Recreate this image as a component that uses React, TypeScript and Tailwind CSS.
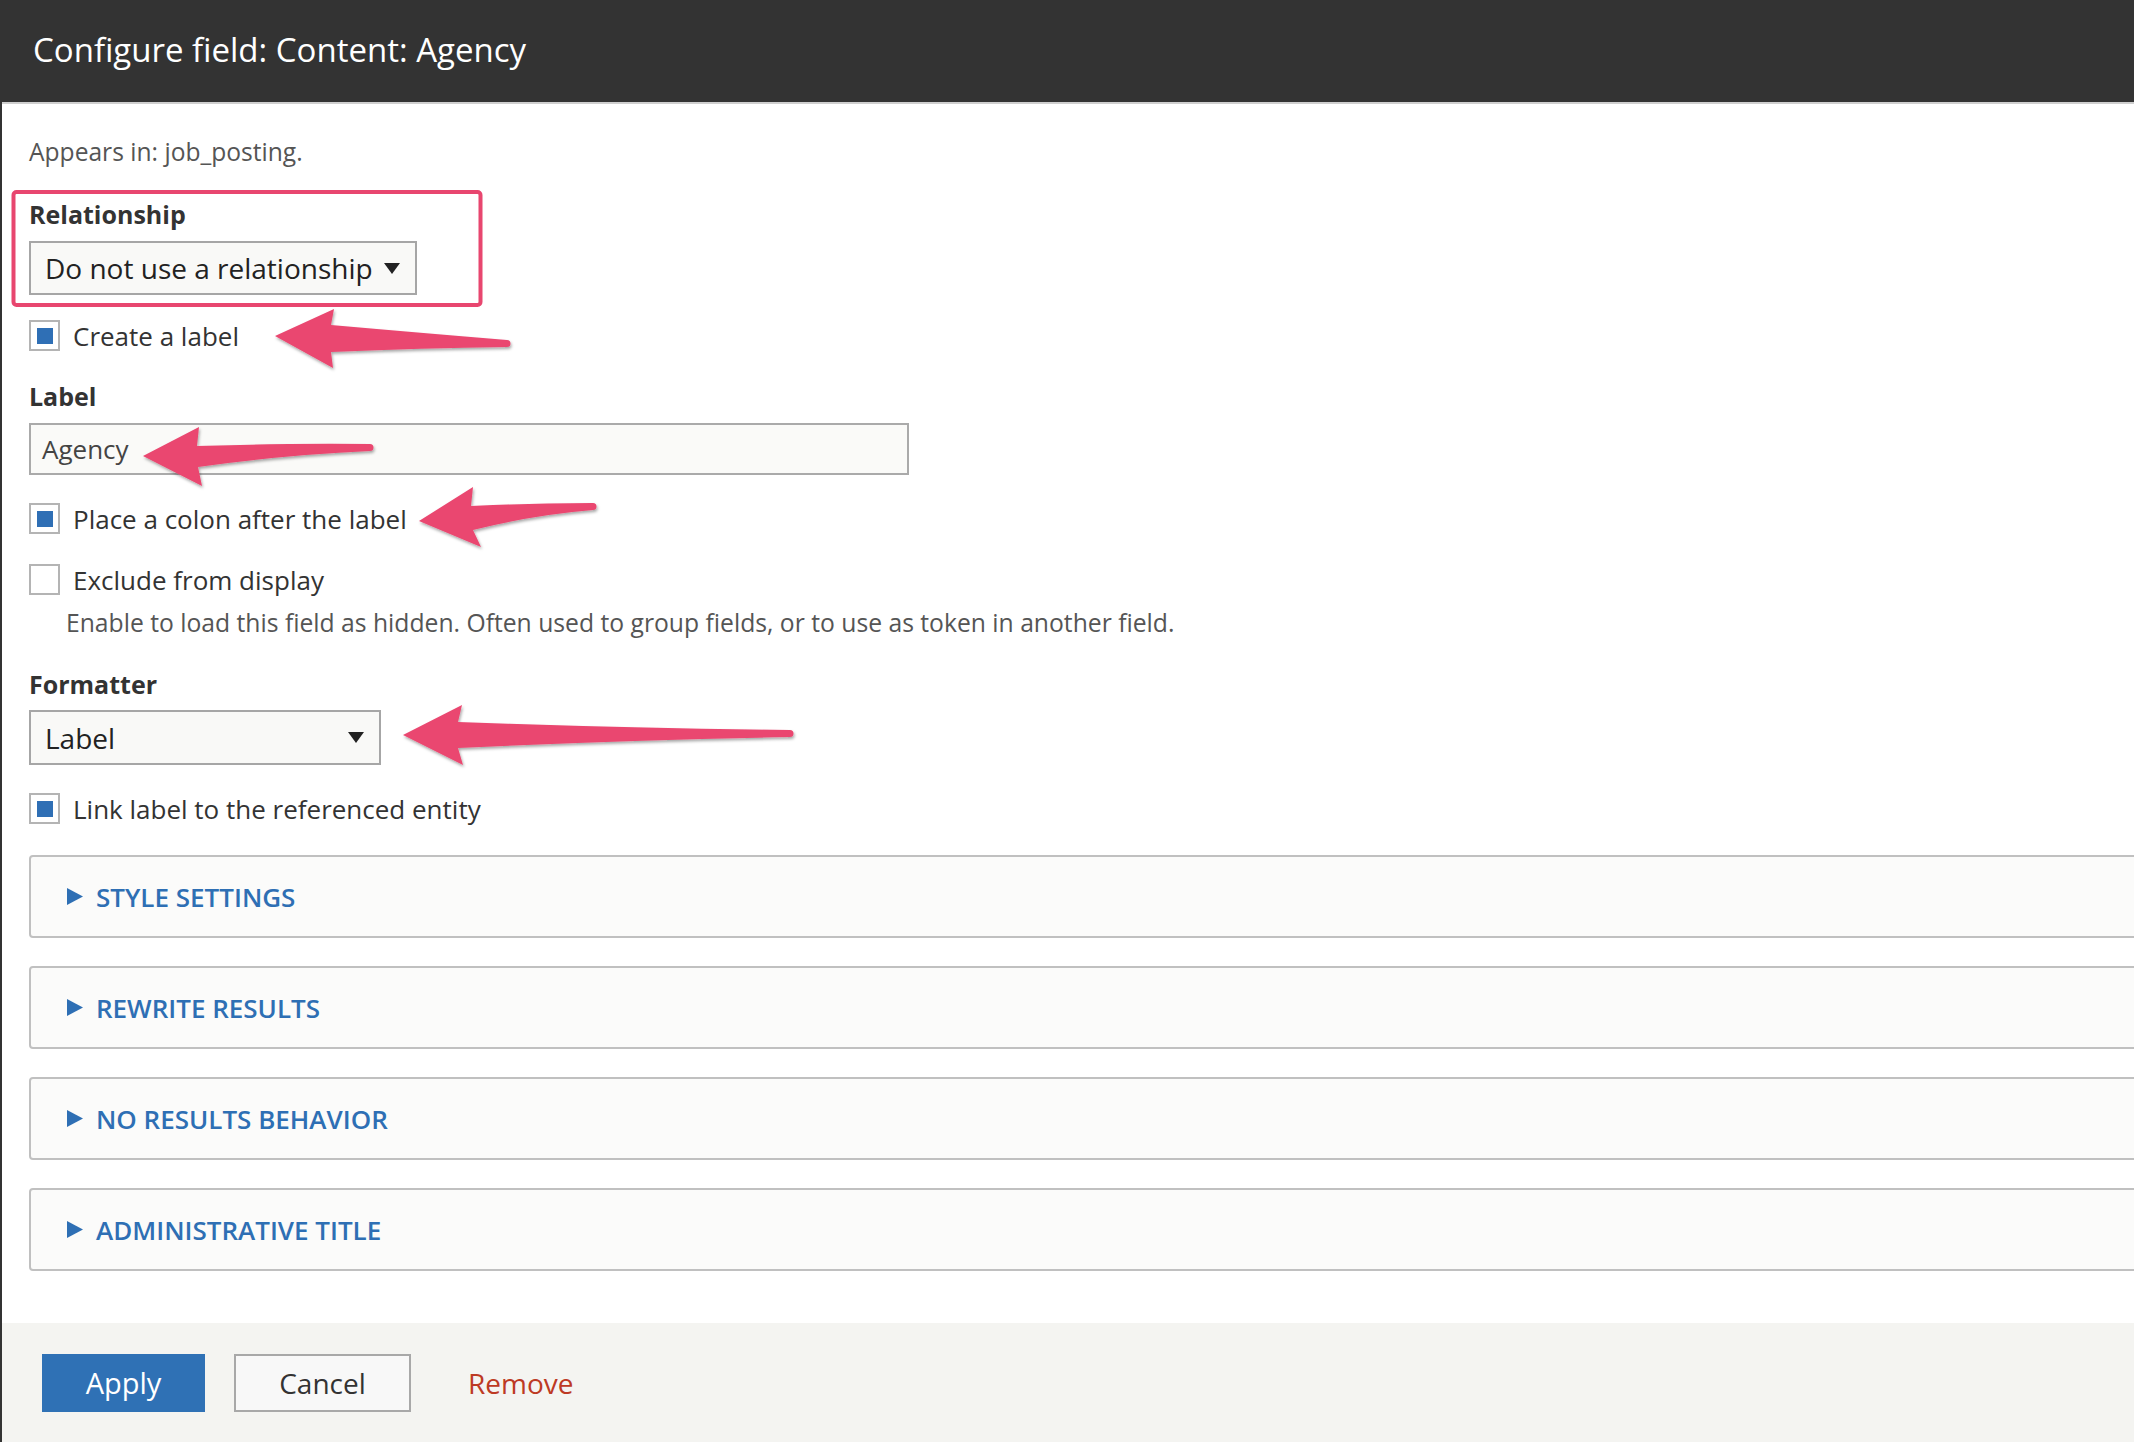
import React from 'react';

const ARROWS = [
  'M273,336 L332,309 L329,325 Q420,333 505,340 A3.5,3.5 0 0 1 505,347 Q420,348 329,352 L331,368 Z',
  'M141,456 L197,427 L195,446 Q290,443 368,444 A3.5,3.5 0 0 1 368,451 Q280,455 196,467 L200,486 Z',
  'M417,521 L471,487 L469,506 Q530,503 591,503 A3.5,3.5 0 0 1 591,510 Q530,515 471,530 L479,547 Z',
  'M401,735 L460,705 L456,722 Q620,728 788,730 A3.5,3.5 0 0 1 788,737 Q620,740 456,748 L461,765 Z',
];

const SECTIONS = ['Style settings', 'Rewrite results', 'No results behavior', 'Administrative title'];

function Checkbox({ checked, label, className = '' }: { checked: boolean; label: string; className?: string }) {
  return (
    <div className={`flex h-[31px] items-center ${className}`}>
      <span className="flex h-[31px] w-[31px] items-center justify-center border-2 border-[#b4b4b4] bg-white">
        {checked && <span className="h-[16px] w-[16px] bg-[#2f6fb5]" />}
      </span>
      <span className="ml-[13px] text-[26px] leading-none text-[#333]">{label}</span>
    </div>
  );
}

function Select({ value, width, className = '' }: { value: string; width: string; className?: string }) {
  return (
    <div
      className={`flex items-center justify-between border-2 border-[#a6a6a6] bg-[#f9f9f7] pl-[14px] pr-[15px] ${width} ${className}`}
    >
      <span className="text-[28px] leading-none text-[#222]">{value}</span>
      <svg width="16" height="11" viewBox="0 0 16 11" className="ml-2">
        <path d="M0 0 H16 L8 11 Z" fill="#222" />
      </svg>
    </div>
  );
}

function Details({ title }: { title: string }) {
  return (
    <div className="mr-[-40px] flex h-[83px] items-center rounded-[4px] border-2 border-[#c0c0c0] bg-[#fbfbfa] pl-[36px]">
      <svg width="16" height="17" viewBox="0 0 16 17">
        <path d="M0 0 L16 8.5 L0 17 Z" fill="#2e6fb4" />
      </svg>
      <span className="ml-[13px] text-[26px] font-semibold uppercase leading-none text-[#2e6fb4]">{title}</span>
    </div>
  );
}

export default function App() {
  return (
    <div className="relative flex h-screen flex-col overflow-hidden border-l-2 border-[#333] bg-white font-['Open_Sans',sans-serif]">
      <header className="flex h-[104px] shrink-0 items-center border-b-2 border-[#cfcfcf] bg-[#333] pb-[2px] pl-[31px]">
        <h1 className="text-[33px] font-normal text-white">Configure field: Content: Agency</h1>
      </header>

      <main className="flex flex-col pl-[27px]">
        <p className="mt-[30px] text-[24.6px] leading-[36px] text-[#555]">Appears in: job_posting.</p>

        <label className="mt-[26px] text-[25px] font-bold leading-[36px] text-[#333]">Relationship</label>
        <Select value="Do not use a relationship" width="w-[388px]" className="mt-[9px] h-[54px]" />

        <Checkbox checked label="Create a label" className="mt-[25px]" />

        <label className="mt-[27px] text-[25px] font-bold leading-[36px] text-[#333]">Label</label>
        <div className="mt-[9px] flex h-[52px] w-[880px] items-center border-2 border-[#aaa] bg-[#fafaf8] pl-[11px]">
          <span className="text-[26px] leading-none text-[#444]">Agency</span>
        </div>

        <Checkbox checked label="Place a colon after the label" className="mt-[28px]" />
        <Checkbox checked={false} label="Exclude from display" className="mt-[30px]" />
        <p className="mt-[12px] pl-[37px] text-[24.7px] leading-[32px] text-[#555]">
          Enable to load this field as hidden. Often used to group fields, or to use as token in another field.
        </p>

        <label className="mt-[27px] text-[25px] font-bold leading-[36px] text-[#333]">Formatter</label>
        <Select value="Label" width="w-[352px]" className="mt-[8px] h-[55px]" />

        <Checkbox checked label="Link label to the referenced entity" className="mt-[28px]" />

        <div className="mt-[31px] flex flex-col gap-[28px]">
          {SECTIONS.map((s) => (
            <Details key={s} title={s} />
          ))}
        </div>
      </main>

      <footer className="mt-auto flex h-[119px] shrink-0 items-start bg-[#f4f4f1] pl-[40px] pt-[31px]">
        <button className="h-[58px] w-[163px] bg-[#2f71b5] text-[29px] text-white">Apply</button>
        <button className="ml-[29px] h-[58px] w-[177px] border-2 border-[#a8a8a8] bg-[#f8f8f8] text-[28px] text-[#333]">
          Cancel
        </button>
        <button className="ml-[57px] h-[58px] text-[28px] text-[#bd3a24]">Remove</button>
      </footer>

      {/* annotations */}
      <svg className="pointer-events-none absolute left-0 top-0" width="2134" height="1442">
        <defs>
          <filter id="shadow" x="-10%" y="-20%" width="130%" height="160%">
            <feDropShadow dx="1" dy="2" stdDeviation="1.5" floodColor="#000" floodOpacity="0.35" />
          </filter>
        </defs>
        <rect x="11.5" y="192" width="467" height="113" rx="3" fill="none" stroke="#e8466f" strokeWidth="4" />
        {ARROWS.map((d, i) => (
          <path key={i} d={d} fill="#ea4770" filter="url(#shadow)" />
        ))}
      </svg>
    </div>
  );
}
